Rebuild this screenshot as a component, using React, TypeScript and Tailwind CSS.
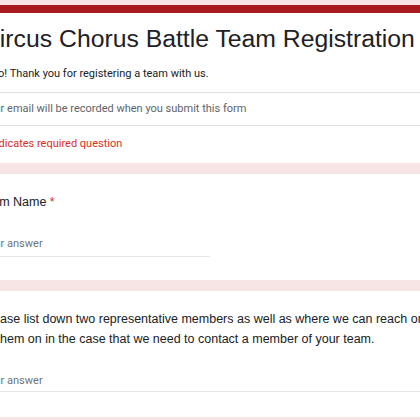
import React from "react";

const sans = { fontFamily: '"Liberation Sans", Arial, sans-serif' };
const roboto = { fontFamily: 'Roboto, "Liberation Sans", Arial, sans-serif' };

export default function App() {
  return (
    <div className="w-[420px] h-[420px] overflow-hidden bg-[#f7e4e5] pt-[5px]">
      <div className="ml-[-42px] w-[528px] flex flex-col gap-[11px]">
        {/* Header card */}
        <div className="bg-white rounded-lg border-t-[8px] border-[#a81a1d] overflow-hidden">
          <div className="pl-[24px] pr-[24px]">
            <h1
              className="pt-[11px] text-[24.75px] leading-[30px] text-[#202124] whitespace-nowrap"
              style={sans}
            >
              Circus Chorus Battle Team Registration
            </h1>
            <p
              className="ml-[-3px] mt-[12px] text-[11px] leading-[16px] text-[#202124] pb-[10px]"
              style={roboto}
            >
              Hello! Thank you for registering a team with us.
            </p>
          </div>
          <div className="h-px bg-[#e2e2e2]" />
          <div
            className="pl-[24px] pt-[7.5px] pb-[8.5px] text-[11px] leading-[16px] text-[#5f6368]"
            style={roboto}
          >
            Your email will be recorded when you submit this form
          </div>
          <div className="h-px bg-[#e2e2e2]" />
          <div
            className="pl-[24px] pt-[9.5px] pb-[11px] text-[11px] leading-[16px] text-[#d93025]"
            style={roboto}
          >
            * Indicates required question
          </div>
        </div>

        {/* Team Name card */}
        <div className="bg-white rounded-lg pl-[24px] pr-[24px] pt-[19.5px] pb-[23px]">
          <div className="ml-[-3px] text-[12.5px] leading-[18px] text-[#202124]" style={sans}>
            Team Name <span className="text-[#d93025]">*</span>
          </div>
          <div className="mt-[25px] w-[228px] border-b border-[#e6e6e6] pb-[3.5px]">
            <div className="text-[11px] leading-[16px] text-[#70757a]" style={roboto}>
              Your answer
            </div>
          </div>
        </div>

        {/* Representatives card */}
        <div className="bg-white rounded-lg pl-[24px] pr-[24px] pt-[18px] pb-[25px]">
          <div
            className="ml-[14.5px] w-[471px] text-[12.5px] leading-[20px] text-[#202124]"
            style={sans}
          >
            <span className="ml-[-14.5px]">Please</span> list down two representative members as
            well as where we can reach one of them on in the case that we need to contact a
            member of your team.
          </div>
          <div className="mt-[24.5px] border-b border-[#e6e6e6] pb-[1.5px]">
            <div className="text-[11px] leading-[16px] text-[#70757a]" style={roboto}>
              Your answer
            </div>
          </div>
        </div>
      </div>
    </div>
  );
}
